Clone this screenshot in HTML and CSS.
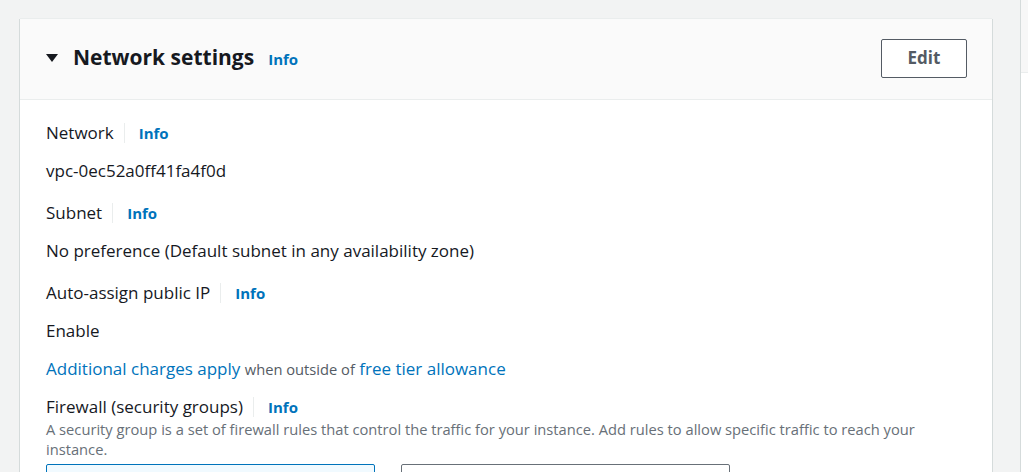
FILE: index.html
```html
<!DOCTYPE html>
<html>
<head>
<meta charset="utf-8">
<link rel="stylesheet" href="styles.css">
</head>
<body>
<div class="page">
  <section class="card">
    <header class="card-header">
      <div class="title-group">
        <svg class="caret" width="12" height="8" viewBox="0 0 12 8"><path d="M0 0 H12 L6 8 Z" fill="#16191f"/></svg>
        <h2 class="title">Network settings</h2>
        <a class="info info-title">Info</a>
      </div>
      <button class="btn-edit">Edit</button>
    </header>
    <div class="card-body">
      <div class="label"><span>Network</span><span class="sep"></span><a class="info">Info</a></div>
      <div class="value">vpc-0ec52a0ff41fa4f0d</div>

      <div class="label"><span>Subnet</span><span class="sep"></span><a class="info">Info</a></div>
      <div class="value">No preference (Default subnet in any availability zone)</div>

      <div class="label"><span>Auto-assign public IP</span><span class="sep"></span><a class="info">Info</a></div>
      <div class="value value-tight">Enable</div>

      <div class="charges"><a class="link">Additional charges apply</a> <span class="small">when outside of</span> <a class="link">free tier allowance</a></div>

      <div class="label label-fw"><span>Firewall (security groups)</span><span class="sep"></span><a class="info">Info</a></div>
      <div class="desc">A security group is a set of firewall rules that control the traffic for your instance. Add rules to allow specific traffic to reach your instance.</div>
      <div class="tiles">
        <div class="tile tile-selected"></div>
        <div class="tile"></div>
      </div>
    </div>
  </section>
  <aside class="side"><div class="side-top"></div></aside>
</div>
</body>
</html>
```
FILE: styles.css
```css
html, body {
  margin: 0;
  padding: 0;
  background: #f2f3f3;
  font-family: "Open Sans", "Noto Sans", sans-serif;
  color: #16191f;
  overflow: hidden;
}
.page {
  display: flex;
  padding-left: 20px;
  padding-top: 19px;
  height: 472px;
  box-sizing: border-box;
}
.card {
  width: 972px;
  flex: none;
  background: #fff;
  box-shadow: -1px 0 0 #d5dbdb, 1px 0 0 #d5dbdb, 0 -1px 0 #eaeded;
  box-sizing: border-box;
}
.card-header {
  height: 81px;
  background: #fafafa;
  border-bottom: 1px solid #eaeded;
  box-sizing: border-box;
  display: flex;
  align-items: center;
  justify-content: space-between;
  padding: 0 25px 0 26px;
}
.title-group {
  display: flex;
  align-items: center;
  margin-top: -4px;
}
.caret {
  display: block;
  margin-right: 15px;
  margin-top: 2px;
}
.title {
  margin: 0;
  font-size: 21px;
  font-weight: 700;
  line-height: 30px;
}
.info {
  color: #0073bb;
  font-weight: 700;
  font-size: 15px;
  line-height: 20px;
}
.info-title {
  margin-left: 14px;
  margin-top: 3px;
}
.btn-edit {
  width: 86px;
  height: 39px;
  margin-top: -2px;
  border: 1px solid #545b64;
  border-radius: 2px;
  background: #fff;
  color: #545b64;
  font-family: inherit;
  font-weight: 700;
  font-size: 17px;
  padding: 0 0 2px 0;
}
.card-body {
  padding: 21px 26px 0 26px;
  display: flex;
  flex-direction: column;
  align-items: flex-start;
}
.label {
  display: flex;
  align-items: center;
  font-size: 17px;
  line-height: 24px;
  margin-bottom: 14px;
}
.sep {
  width: 1px;
  height: 20px;
  background: #eaeded;
  margin: 0 14px 0 10px;
}
.value {
  font-size: 17px;
  line-height: 24px;
  margin-bottom: 18px;
}
.value-tight {
  margin-bottom: 14px;
}
.charges {
  font-size: 17px;
  line-height: 24px;
  margin-bottom: 14px;
}
.link {
  color: #0073bb;
}
.small {
  font-size: 14.7px;
  color: #545b64;
}
.label-fw {
  margin-bottom: 0;
}
.desc {
  font-size: 14.7px;
  line-height: 20px;
  color: #687078;
  max-width: 880px;
  margin-bottom: 5px;
}
.tiles {
  display: flex;
  gap: 26px;
}
.tile {
  width: 329px;
  height: 40px;
  border: 1px solid #687078;
  border-radius: 2px;
  box-sizing: border-box;
  background: #fff;
}
.tile-selected {
  border-color: #0073bb;
  background: #f1faff;
}
.side {
  margin-left: 28px;
  margin-top: -19px;
  flex: 1;
  background: #fff;
  border-left: 1px solid #d5dbdb;
}
.side-top {
  height: 72px;
  background: #f7f7f7;
  border-bottom: 1px solid #eaeded;
}
```
